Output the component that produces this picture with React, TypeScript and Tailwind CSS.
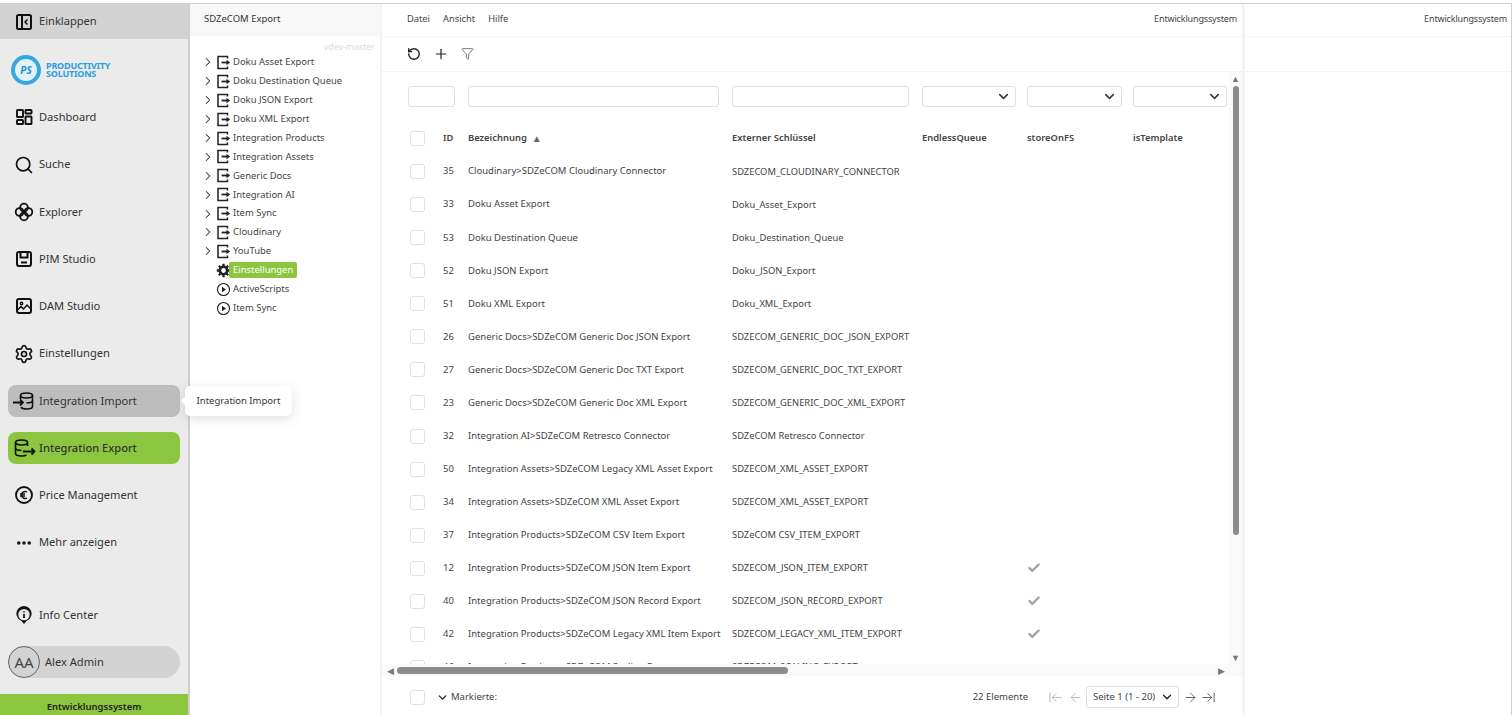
import React from "react";
import { Search, Settings, Ellipsis, RotateCw, Plus, Funnel, ChevronDown, ChevronRight, Check, ArrowLeft, ArrowRight, ArrowLeftToLine, ArrowRightToLine } from "lucide-react";

const FONT = "font-['Noto_Sans','Open_Sans',sans-serif]";

function IconCollapse() {
  return (
    <svg width="20" height="20" viewBox="0 0 20 20" fill="none" stroke="#111" strokeWidth="2" className="shrink-0">
      <rect x="3" y="3" width="14" height="14" rx="1.5" />
      <path d="M8 3v14" />
      <path d="M13.5 7.5 11 10l2.5 2.5" strokeWidth="1.5" />
    </svg>
  );
}

function IconDashboard() {
  return (
    <svg width="20" height="20" viewBox="0 0 20 20" fill="none" stroke="#111" strokeWidth="1.9" className="shrink-0">
      <rect x="3" y="3" width="6" height="7" rx="0.6" />
      <rect x="11.5" y="3" width="6" height="3.5" rx="0.6" />
      <rect x="3" y="13" width="6" height="4" rx="0.6" />
      <rect x="11.5" y="9.5" width="6" height="7.5" rx="0.6" />
    </svg>
  );
}

function IconExplorer() {
  return (
    <svg width="20" height="20" viewBox="0 0 20 20" fill="none" stroke="#111" strokeWidth="1.8" className="shrink-0">
      <circle cx="10" cy="5.6" r="3.9" />
      <circle cx="10" cy="14.4" r="3.9" />
      <circle cx="5.6" cy="10" r="3.9" />
      <circle cx="14.4" cy="10" r="3.9" />
    </svg>
  );
}

function IconPim() {
  return (
    <svg width="20" height="20" viewBox="0 0 20 20" fill="none" stroke="#111" strokeWidth="2" className="shrink-0">
      <rect x="3" y="3" width="14" height="14" rx="2" />
      <path d="M6.5 3v5.5h7V3" />
      <path d="M7 13.5h6" />
    </svg>
  );
}

function IconDam() {
  return (
    <svg width="20" height="20" viewBox="0 0 20 20" fill="none" stroke="#111" strokeWidth="2" className="shrink-0">
      <rect x="3" y="3" width="14" height="14" rx="2" />
      <circle cx="7.5" cy="7.5" r="1.2" strokeWidth="1.4" />
      <path d="m3.5 14 3.5-3.5 2.5 2.5 3.5-4 3.5 3.5" strokeWidth="1.5" />
    </svg>
  );
}

function IconImport() {
  return (
    <svg width="22" height="20" viewBox="0 0 22 20" fill="none" stroke="#111" strokeWidth="1.6" className="shrink-0 -ml-[2px]">
      <ellipse cx="14.5" cy="4.5" rx="6" ry="2.5" />
      <path d="M8.5 4.5V8M20.5 4.5v11c0 1.4-2.7 2.5-6 2.5-2.6 0-4.8-.7-5.6-1.7" />
      <path d="M20.5 9.5c0 1.4-2.7 2.5-6 2.5" />
      <path d="M1 11.5h10M8 8.5l3 3-3 3" strokeWidth="1.8" />
    </svg>
  );
}

function IconExport() {
  return (
    <svg width="22" height="20" viewBox="0 0 22 20" fill="none" stroke="#111" strokeWidth="1.6" className="shrink-0 ml-[2px]">
      <ellipse cx="7.5" cy="4.5" rx="6" ry="2.5" />
      <path d="M13.5 4.5V8M1.5 4.5v11c0 1.4 2.7 2.5 6 2.5 2.2 0 4-.4 5-1.2" />
      <path d="M1.5 10c0 1.4 2.7 2.5 6 2.5" />
      <path d="M9 13.5h11M17.5 10.5l3 3-3 3" strokeWidth="1.8" />
    </svg>
  );
}

function IconPrice() {
  return (
    <svg width="20" height="20" viewBox="0 0 20 20" fill="none" stroke="#111" className="shrink-0">
      <circle cx="10" cy="10" r="8" strokeWidth="1.9" />
      <path d="M13 7a3.6 3.6 0 0 0-5.5 3 3.6 3.6 0 0 0 5.5 3M6 9h5M6 11h5" strokeWidth="1.4" />
    </svg>
  );
}

function IconInfo() {
  return (
    <svg width="20" height="20" viewBox="0 0 20 20" fill="none" className="shrink-0">
      <path d="M10 19 7 15.6A7.6 7.6 0 1 1 13 15.6Z" fill="#111" />
      <circle cx="10" cy="9.6" r="5.7" fill="#ebebeb" />
      <path d="M10 9v4M10 6.2v1.4" stroke="#111" strokeWidth="1.7" />
    </svg>
  );
}

function IconTreeExport() {
  return (
    <svg width="15" height="15" viewBox="0 0 15 15" fill="none" stroke="#222" strokeWidth="1.5" className="shrink-0">
      <path d="M11.5 3.5V1.5H2v12h9.5v-2" />
      <path d="M5.5 7.5H12" strokeWidth="1.8" />
      <path d="M10.5 4.8l3.7 2.7-3.7 2.7Z" fill="#222" stroke="none" />
    </svg>
  );
}

function IconTreePlay() {
  return (
    <svg width="15" height="15" viewBox="0 0 15 15" fill="none" className="shrink-0">
      <circle cx="7.5" cy="7.5" r="6" stroke="#222" strokeWidth="1.1" />
      <path d="M6 4.8l4 2.7-4 2.7Z" fill="#222" />
    </svg>
  );
}

function IconGearSolid() {
  return (
    <svg width="15" height="15" viewBox="0 0 15 15" className="shrink-0">
      <circle cx="7.5" cy="7.5" r="3.7" fill="none" stroke="#222" strokeWidth="2.6" />
      <path d="M7.5 0.8v2.4M7.5 11.8v2.4M0.8 7.5h2.4M11.8 7.5h2.4M2.8 2.8l1.7 1.7M10.5 10.5l1.7 1.7M2.8 12.2l1.7-1.7M10.5 4.5l1.7-1.7" stroke="#222" strokeWidth="2.3" />
    </svg>
  );
}

function Logo() {
  return (
    <div className="flex items-center gap-[5px] h-[32px] pl-[11px]">
      <div className="w-[30px] h-[30px] rounded-full bg-[#35a7e2] flex items-center justify-center">
        <div className="w-[22px] h-[22px] rounded-full bg-[#e4f3fb] flex items-center justify-center text-[10px] italic font-bold text-[#1b8fd0]">PS</div>
      </div>
      <div className="text-[9px] font-bold leading-[7.5px] text-[#2a9fdb] tracking-[-0.2px] pb-[1px]">
        <div>PRODUCTIVITY</div>
        <div>SOLUTIONS</div>
      </div>
    </div>
  );
}

function NavItem({ icon, label, className = "" }: { icon: React.ReactNode; label: string; className?: string }) {
  return (
    <div className={`mx-[8px] h-[32px] flex items-center gap-[7px] pl-[8px] rounded-[8px] text-[11.1px] text-[#333] ${className}`}>
      <span className="w-[16px] h-[20px] flex items-center justify-center shrink-0">{icon}</span>
      <span className="whitespace-nowrap">{label}</span>
    </div>
  );
}

function Sidebar() {
  return (
    <div className="w-[190px] shrink-0 h-full bg-[#ebebeb] border-r-2 border-[#cfcfcf] flex flex-col">
      <div className="h-[35px] bg-[#d3d3d3] flex items-center gap-[7px] pl-[16px] text-[11.1px] text-[#333] shrink-0">
        <span className="w-[16px] flex justify-center"><IconCollapse /></span>
        Einklappen
      </div>
      <div className="mt-[15px] mb-[15.4px]"><Logo /></div>
      <div className="flex flex-col gap-[15.25px]">
        <NavItem icon={<IconDashboard />} label="Dashboard" />
        <NavItem icon={<Search size={20} color="#111" strokeWidth={2} className="shrink-0" />} label="Suche" />
        <NavItem icon={<IconExplorer />} label="Explorer" />
        <NavItem icon={<IconPim />} label="PIM Studio" />
        <NavItem icon={<IconDam />} label="DAM Studio" />
        <NavItem icon={<Settings size={20} color="#111" strokeWidth={2} className="shrink-0" />} label="Einstellungen" />
        <div className="relative">
          <NavItem icon={<IconImport />} label="Integration Import" className="bg-[#bdbdbd]" />
          <div className="absolute left-[185px] top-[1px] z-10 h-[30px] w-[107px] bg-white rounded-[5px] shadow-[0_3px_12px_rgba(0,0,0,0.12)] flex items-center justify-center text-[9.5px] text-[#333]">
            <span className="absolute left-[-3px] top-[12px] w-[6px] h-[6px] bg-white rotate-45" />
            Integration Import
          </div>
        </div>
        <NavItem icon={<IconExport />} label="Integration Export" className="bg-[#8cc63f] font-medium text-[#222]" />
        <NavItem icon={<IconPrice />} label="Price Management" />
        <NavItem icon={<Ellipsis size={18} color="#111" strokeWidth={2.8} className="shrink-0" />} label="Mehr anzeigen" />
      </div>
      <div className="mt-auto">
        <NavItem icon={<IconInfo />} label="Info Center" />
        <div className="mx-[8px] mt-[15px] h-[32px] rounded-full bg-[#d3d3d3] flex items-center text-[11.1px] text-[#333]">
          <div className="w-[32px] h-[32px] rounded-full border border-[#666] flex items-center justify-center text-[15px] text-[#444] shrink-0">AA</div>
          <span className="ml-[5px]">Alex Admin</span>
        </div>
        <div className="mt-[16px] h-[21px] bg-[#8cc63f] flex items-center justify-center pt-[5px] text-[9.5px] font-semibold text-[#222]">Entwicklungssystem</div>
      </div>
    </div>
  );
}

const treeFolders = [
  "Doku Asset Export",
  "Doku Destination Queue",
  "Doku JSON Export",
  "Doku XML Export",
  "Integration Products",
  "Integration Assets",
  "Generic Docs",
  "Integration AI",
  "Item Sync",
  "Cloudinary",
  "YouTube",
];

function TreeRow({ chevron, icon, children }: { chevron?: boolean; icon: React.ReactNode; children: React.ReactNode }) {
  return (
    <div className="h-[18.9px] flex items-center text-[9.45px] text-[#444]">
      <span className="w-[12px] shrink-0 flex justify-start">{chevron && <ChevronRight size={14} color="#333" strokeWidth={1.8} className="-ml-[3px] shrink-0" />}</span>
      {icon}
      {children}
    </div>
  );
}

function TreePanel() {
  return (
    <div className="w-[192px] shrink-0 h-full border-r-2 border-[#f3f3f3] flex flex-col">
      <div className="h-[32px] bg-[#f8f8f8] flex items-center pl-[14px] pb-[2px] text-[9.5px] text-[#333] shrink-0">SDZeCOM Export</div>
      <div className="text-right pr-[5px] text-[8.8px] text-[#dcdcdc] h-[12px] mt-[5px] leading-[12px]">vdev-master</div>
      <div className="pl-[14px]">
        {treeFolders.map((t) => (
          <TreeRow key={t} chevron icon={<IconTreeExport />}>
            <span className="ml-[2px]">{t}</span>
          </TreeRow>
        ))}
        <TreeRow icon={<IconGearSolid />}>
          <span className="bg-[#8cc63f] text-white rounded-[2px] px-[4px] ml-[-2px] leading-[16px]">Einstellungen</span>
        </TreeRow>
        <TreeRow icon={<IconTreePlay />}><span className="ml-[2px]">ActiveScripts</span></TreeRow>
        <TreeRow icon={<IconTreePlay />}><span className="ml-[2px]">Item Sync</span></TreeRow>
      </div>
    </div>
  );
}

const COLS = "grid grid-cols-[60px_264px_190px_105px_106px_94px]";

type Row = { id: string; name: string; key: string; fs?: boolean };
const rows: Row[] = [
  { id: "35", name: "Cloudinary>SDZeCOM Cloudinary Connector", key: "SDZECOM_CLOUDINARY_CONNECTOR" },
  { id: "33", name: "Doku Asset Export", key: "Doku_Asset_Export" },
  { id: "53", name: "Doku Destination Queue", key: "Doku_Destination_Queue" },
  { id: "52", name: "Doku JSON Export", key: "Doku_JSON_Export" },
  { id: "51", name: "Doku XML Export", key: "Doku_XML_Export" },
  { id: "26", name: "Generic Docs>SDZeCOM Generic Doc JSON Export", key: "SDZECOM_GENERIC_DOC_JSON_EXPORT" },
  { id: "27", name: "Generic Docs>SDZeCOM Generic Doc TXT Export", key: "SDZECOM_GENERIC_DOC_TXT_EXPORT" },
  { id: "23", name: "Generic Docs>SDZeCOM Generic Doc XML Export", key: "SDZECOM_GENERIC_DOC_XML_EXPORT" },
  { id: "32", name: "Integration AI>SDZeCOM Retresco Connector", key: "SDZeCOM Retresco Connector" },
  { id: "50", name: "Integration Assets>SDZeCOM Legacy XML Asset Export", key: "SDZECOM_XML_ASSET_EXPORT" },
  { id: "34", name: "Integration Assets>SDZeCOM XML Asset Export", key: "SDZECOM_XML_ASSET_EXPORT" },
  { id: "37", name: "Integration Products>SDZeCOM CSV Item Export", key: "SDZeCOM CSV_ITEM_EXPORT" },
  { id: "12", name: "Integration Products>SDZeCOM JSON Item Export", key: "SDZECOM_JSON_ITEM_EXPORT", fs: true },
  { id: "40", name: "Integration Products>SDZeCOM JSON Record Export", key: "SDZECOM_JSON_RECORD_EXPORT", fs: true },
  { id: "42", name: "Integration Products>SDZeCOM Legacy XML Item Export", key: "SDZECOM_LEGACY_XML_ITEM_EXPORT", fs: true },
  { id: "46", name: "Integration Products>SDZeCOM Scaling Export", key: "SDZECOM_SCALING_EXPORT" },
];

function Box() {
  return <span className="block w-[15px] h-[15px] ml-[2px] rounded-[3px] border border-[#e2e2e2] bg-white shrink-0" />;
}

function SelectFilter() {
  return (
    <div className="h-[21px] border border-[#dedede] rounded-[3px] flex items-center justify-end pr-[4px]">
      <ChevronDown size={15} color="#333" strokeWidth={2.4} />
    </div>
  );
}

function MainPanel() {
  return (
    <div className="w-[860px] shrink-0 h-full flex flex-col">
      <div className="h-[33px] border-b border-[#f6f6f6] flex items-center justify-between pl-[25px] pr-[5px] pb-[2px] text-[9.3px] text-[#444] shrink-0">
        <div className="flex gap-[13px]">
          <span>Datei</span>
          <span>Ansicht</span>
          <span>Hilfe</span>
        </div>
        <span className="text-[9px] tracking-[-0.15px]">Entwicklungssystem</span>
      </div>
      <div className="h-[35px] border-b border-[#f3f3f3] flex items-center pl-[25px] gap-[12px] shrink-0">
        <RotateCw size={14} color="#222" strokeWidth={2.4} className="-scale-x-100" />
        <Plus size={16} color="#222" strokeWidth={1.8} />
        <Funnel size={13} color="#444" strokeWidth={1.3} className="-mt-[2px]" />
      </div>
      <div className="flex-1 min-h-0 flex">
        <div className="flex-1 min-w-0 flex flex-col">
          <div className="flex-1 min-h-0 overflow-hidden pl-[26px]">
            <div className={`${COLS} mt-[14px] h-[21px]`}>
              <div className="pr-[13px]"><div className="h-[21px] border border-[#dedede] rounded-[3px]" /></div>
              <div className="pr-[13px]"><div className="h-[21px] border border-[#dedede] rounded-[3px]" /></div>
              <div className="pr-[13px]"><div className="h-[21px] border border-[#dedede] rounded-[3px]" /></div>
              <div className="pr-[11px]"><SelectFilter /></div>
              <div className="pr-[11px]"><SelectFilter /></div>
              <div><SelectFilter /></div>
            </div>
            <div className={`${COLS} h-[33px] mt-[15px] items-center text-[9.4px] font-semibold text-[#444] whitespace-nowrap`}>
              <div className="flex items-center"><Box /><span className="ml-[18px]">ID</span></div>
              <div className="flex items-center gap-[5px]">Bezeichnung<span className="text-[10px] leading-none text-[#666]">▲</span></div>
              <div>Externer Schlüssel</div>
              <div>EndlessQueue</div>
              <div>storeOnFS</div>
              <div>isTemplate</div>
            </div>
            {rows.map((r) => (
              <div key={r.id} className={`${COLS} h-[33.07px] items-center text-[9.5px] text-[#444] whitespace-nowrap`}>
                <div className="flex items-center"><Box /><span className="ml-[18px]">{r.id}</span></div>
                <div>{r.name}</div>
                <div className="text-[9.35px]">{r.key}</div>
                <div />
                <div>{r.fs && <Check size={14} color="#a3a3a3" strokeWidth={4} />}</div>
                <div />
              </div>
            ))}
          </div>
          <div className="h-[12px] bg-[#fafafa] flex items-center shrink-0 pl-[5px] pr-[4px]">
            <span className="text-[9px] leading-none text-[#777] w-[10px]">◀</span>
            <div className="w-[391px] h-[7px] rounded-full bg-[#8c8c8c]" />
            <span className="ml-auto text-[9px] leading-none text-[#777]">▶</span>
          </div>
        </div>
        <div className="w-[13px] shrink-0 bg-[#fafafa] flex flex-col items-center pb-[14px]">
          <span className="text-[9px] text-[#777] h-[14px] leading-[14px]">▲</span>
          <div className="w-[6px] h-[449px] rounded-full bg-[#8c8c8c]" />
          <span className="mt-auto text-[9px] leading-none text-[#777]">▼</span>
        </div>
      </div>
      <div className="h-[39px] pt-[3px] flex items-center pl-[26px] pr-[26px] text-[9.5px] text-[#444] shrink-0">
        <Box />
        <ChevronDown size={13} color="#222" strokeWidth={2.4} className="ml-[11px]" />
        <span className="ml-[2px]">Markierte:</span>
        <span className="ml-auto">22 Elemente</span>
        <ArrowLeftToLine size={15} color="#b5b5b5" strokeWidth={1.4} className="ml-[20px]" />
        <ArrowLeft size={15} color="#b5b5b5" strokeWidth={1.4} className="ml-[5px]" />
        <div className="ml-[3px] h-[22px] w-[93px] border border-[#dedede] rounded-[3px] flex items-center justify-between pl-[6px] pr-[4px]">
          <span>Seite 1 (1 - 20)</span>
          <ChevronDown size={14} color="#222" strokeWidth={2.4} />
        </div>
        <ArrowRight size={15} color="#555" strokeWidth={1.4} className="ml-[4px]" />
        <ArrowRightToLine size={15} color="#555" strokeWidth={1.4} className="ml-[3px]" />
      </div>
    </div>
  );
}

function RightPanel() {
  return (
    <div className="flex-1 min-w-0 h-full border-l-[3px] border-[#f3f3f3] border-r border-r-[#d0d0d0] flex flex-col">
      <div className="h-[33px] border-b border-[#f6f6f6] flex items-center justify-end pr-[4px] pb-[2px] text-[9px] text-[#444] tracking-[-0.15px] shrink-0">Entwicklungssystem</div>
      <div className="h-[35px] border-b border-[#f3f3f3] shrink-0" />
    </div>
  );
}

export default function App() {
  return (
    <div className={`${FONT} w-[1512px] h-[715px] overflow-hidden bg-white pt-[3px]`}>
      <div className="h-[712px] border-t border-[#d0d0d0] flex">
        <Sidebar />
        <TreePanel />
        <MainPanel />
        <RightPanel />
      </div>
    </div>
  );
}
